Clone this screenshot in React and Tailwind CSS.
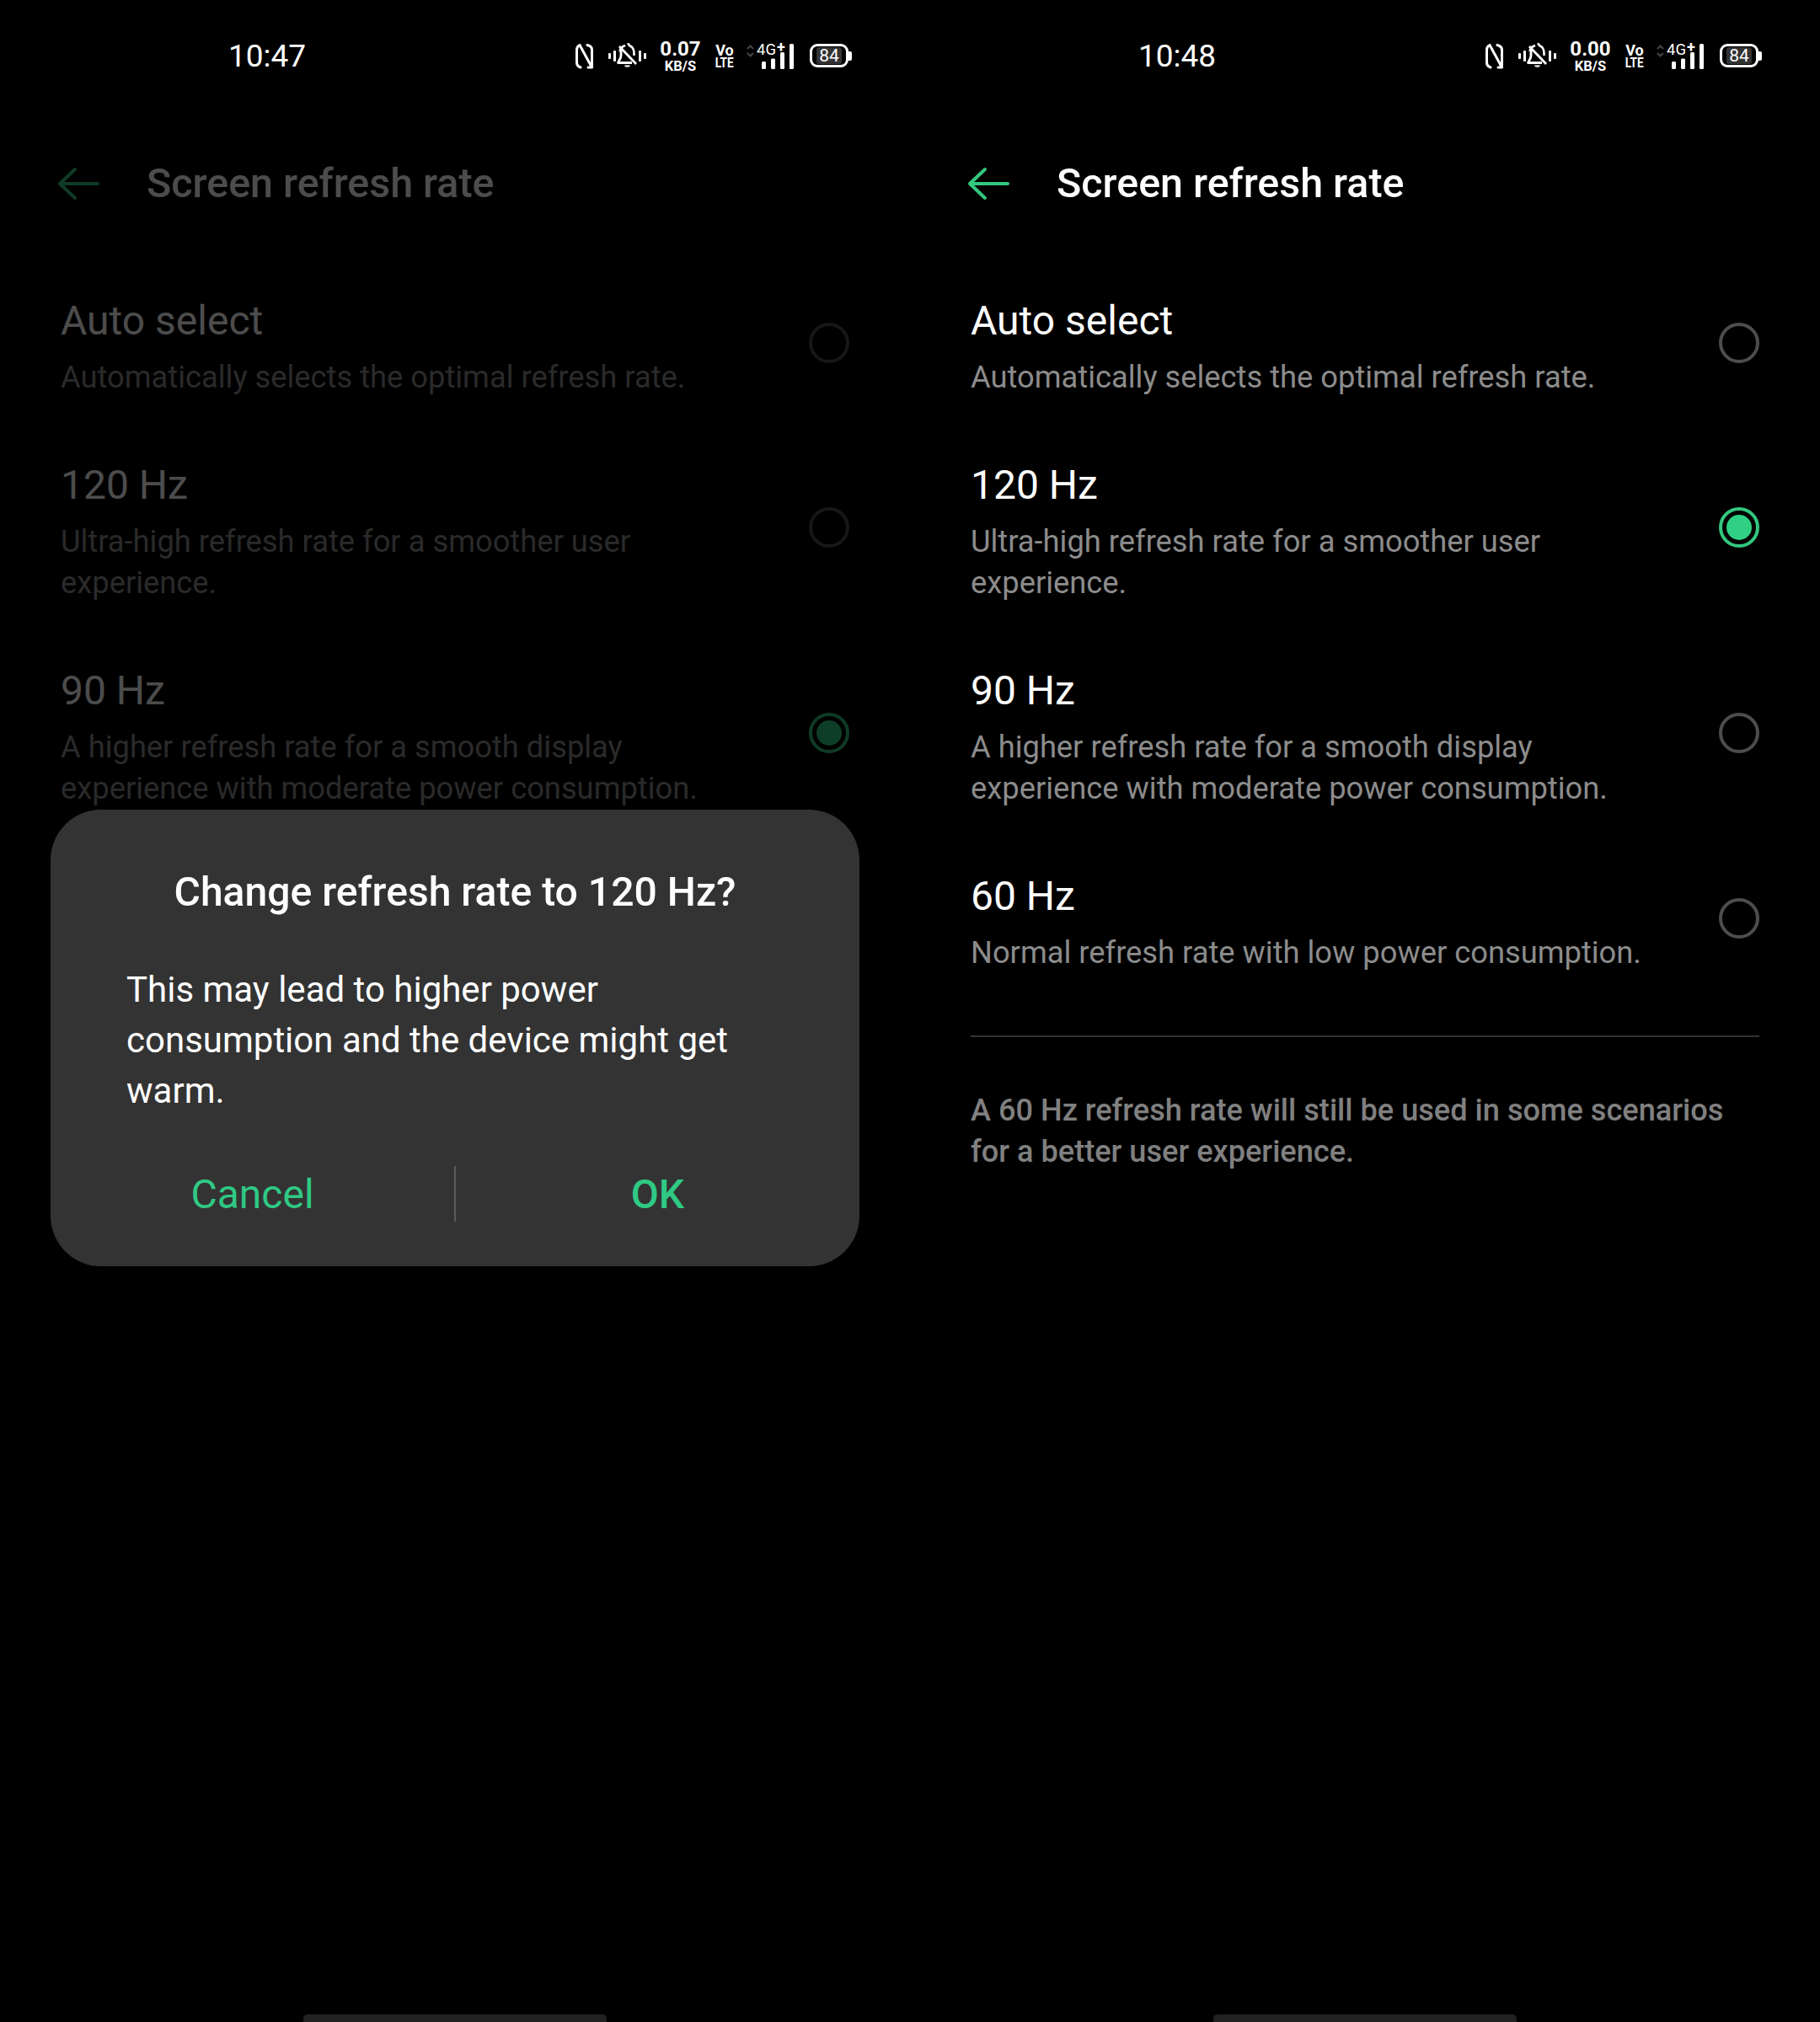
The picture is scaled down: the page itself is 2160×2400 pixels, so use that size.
// Two phone screens side by side: refresh rate settings, left one with the confirm dialog open.
const OPTIONS = [
  { title: '120 Hz', desc: ['Ultra-high refresh rate for a smoother user', 'experience.'] },
  { title: '90 Hz', desc: ['A higher refresh rate for a smooth display', 'experience with moderate power consumption.'] },
  { title: '60 Hz', desc: ['Normal refresh rate with low power consumption.'] },
];

function NfcIcon() {
  return (
    <svg width="21" height="30" viewBox="0 0 21 30" fill="none" stroke="white" strokeWidth="3" strokeLinecap="round" strokeLinejoin="round">
      <path d="M6 28 C3 27 1.500 25 1.500 22 V7 C1.500 4 3 2.500 5 1.500 L19.500 28 H15 M19.500 28 V7 C19.500 4 18 2.500 14 1.500" />
    </svg>
  );
}

function MuteIcon() {
  return (
    <svg width="45" height="31" viewBox="0 0 45 31" fill="white">
      <rect x="0" y="12" width="3" height="7" rx="1" />
      <rect x="6" y="9" width="3" height="13" rx="1" />
      <rect x="36" y="9" width="3" height="13" rx="1" />
      <rect x="42" y="12" width="3" height="7" rx="1" />
      <path d="M22.500 1 a2.500 2.500 0 0 1 2.400 2 C29 4.500 30.500 8 30.500 12 V15 M13.500 10 C14 6.500 17 4 20 3" fill="none" stroke="white" strokeWidth="2.600" />
      <path d="M15 8 V15 C15 18 13 20 11.500 23.500 H28" fill="none" stroke="white" strokeWidth="2.800" strokeLinejoin="round" />
      <path d="M13 4 L33 25" fill="none" stroke="white" strokeWidth="2.800" />
      <path d="M19 26.500 H26 C25.500 29.500 19.500 29.500 19 26.500 Z" />
    </svg>
  );
}

function SignalIcon() {
  return (
    <svg width="57" height="31" viewBox="0 0 57 31" fill="none">
      <path d="M1 7 L4.500 3.500 L8 7 M1 12 L4.500 15.500 L8 12" stroke="#444" strokeWidth="2.200" />
      <rect x="18" y="22" width="5" height="9" rx="1.500" fill="white" />
      <rect x="29" y="18.500" width="5" height="12.500" rx="1.500" fill="white" />
      <rect x="40" y="11" width="5" height="20" rx="1.500" fill="white" />
      <rect x="51" y="1" width="5" height="30" rx="1.500" fill="white" />
    </svg>
  );
}

function StatusBar({ time, speed }) {
  return (
    <div className="flex h-[132px] items-center pl-[271px] text-white">
      <span className="mt-[1px] w-[412px] text-[37px] leading-none">{time}</span>
      <div className="mt-[2px] flex h-[34px] w-[21px] items-center"><NfcIcon /></div>
      <div className="ml-[18px] flex h-[34px] w-[45px] items-center"><MuteIcon /></div>
      <div className="ml-[17px] mt-[2px] flex w-[47px] flex-col items-center font-bold">
        <span className="text-[24px] leading-[23px]">{speed}</span>
        <span className="text-[16.5px] leading-[18px]">KB/S</span>
      </div>
      <div className="ml-[18px] mt-[1px] flex w-[22px] flex-col items-center font-bold">
        <span className="text-[18px] leading-[15px]">Vo</span>
        <span className="scale-x-[.8] text-[17px] leading-[15px]">LTE</span>
      </div>
      <div className="relative ml-[15px] h-[34px] w-[57px]">
        <div className="absolute left-0 top-[2px]"><SignalIcon /></div>
        <span className="absolute left-[12px] top-[-1px] text-[18.5px] leading-[22px]">4G</span>
        <span className="absolute left-[36px] top-[-3px] text-[18px] font-bold leading-[20px]">+</span>
      </div>
      <div className="ml-[18px] flex h-[28px] w-[46px] items-center justify-center rounded-[9px] border-[3px] border-white">
        <div className="flex h-[20px] w-[30px] items-center justify-center rounded-[3px] bg-[#333] text-[21px] leading-none">84</div>
      </div>
      <div className="h-[11px] w-[4px] rounded-r-[2px] bg-white" />
    </div>
  );
}

function Radio({ checked }) {
  return (
    <div className={`mb-[7px] flex h-[48px] w-[48px] shrink-0 items-center justify-center rounded-full border-[4px] ${checked ? 'border-[#33c77f]' : 'border-[#4d4d4d]'}`}>
      {checked && <div className="h-[30px] w-[30px] rounded-full bg-[#2fd083]" />}
    </div>
  );
}

function Row({ title, desc, checked }) {
  return (
    <div className="flex items-center justify-between pb-[35.5px] pt-[36.5px]">
      <div>
        <div className="text-[48px] leading-[64px] text-white">{title}</div>
        <div className="mt-[10px] text-[36.3px] leading-[49px] text-[#8c8c8c]">
          {desc.map((line) => (
            <div key={line}>{line}</div>
          ))}
        </div>
      </div>
      <Radio checked={checked} />
    </div>
  );
}

function Dialog() {
  return (
    <div className="absolute inset-x-0 bottom-0 top-[132px] bg-black/70 px-[60px] pt-[829px]">
      <div className="rounded-[60px] bg-[#333] pb-[52px] pt-[66px]">
        <div className="text-center text-[48.1px] font-medium leading-[64px] text-white">Change refresh rate to 120 Hz?</div>
        <div className="mt-[54px] px-[90px] text-[42px] leading-[60px] text-white">
          <div>This may lead to higher power</div>
          <div>consumption and the device might get</div>
          <div>warm.</div>
        </div>
        <div className="mt-[60px] flex h-[66px] items-center text-[48px] text-[#2fc984]">
          <button className="flex-1">Cancel</button>
          <div className="mb-[2px] h-[66px] w-[2px] bg-[#5a5a5a]" />
          <button className="flex-1 font-medium">OK</button>
        </div>
      </div>
    </div>
  );
}

function Screen({ time, speed, selected, dialog }) {
  return (
    <div className="relative flex h-[2400px] w-[1080px] flex-col bg-black">
      <StatusBar time={time} speed={speed} />
      <div className="flex h-[180px] items-start pl-[68px] pt-[66px]">
        <svg width="50" height="40" viewBox="0 0 50 40" fill="none" stroke="#33c77f" strokeWidth="4" strokeLinecap="round" strokeLinejoin="round">
          <path d="M21 3 L3 20 L21 37 M3 20 H48" />
        </svg>
        <span className="ml-[56px] mt-[-12px] text-[48.4px] font-medium leading-[64px] text-white">Screen refresh rate</span>
      </div>
      <div className="px-[72px]">
        <Row title="Auto select" desc={['Automatically selects the optimal refresh rate.']} checked={selected === 'Auto select'} />
        {OPTIONS.map((option) => (
          <Row key={option.title} title={option.title} desc={option.desc} checked={selected === option.title} />
        ))}
        <div className="mt-[39px] h-[2px] bg-[#333]" />
        <div className="pt-[62px] text-[36.15px] font-medium leading-[49px] text-[#808080]">
          <div>A 60 Hz refresh rate will still be used in some scenarios</div>
          <div>for a better user experience.</div>
        </div>
      </div>
      {dialog && <Dialog />}
      <div className="relative mx-auto mt-auto h-[9px] w-[360px] rounded-t-[5px] bg-[#222]" />
    </div>
  );
}

export default function App() {
  return (
    <div className="flex w-[2160px] bg-black font-['Roboto',sans-serif]">
      <Screen time="10:47" speed="0.07" selected="90 Hz" dialog />
      <Screen time="10:48" speed="0.00" selected="120 Hz" />
    </div>
  );
}
